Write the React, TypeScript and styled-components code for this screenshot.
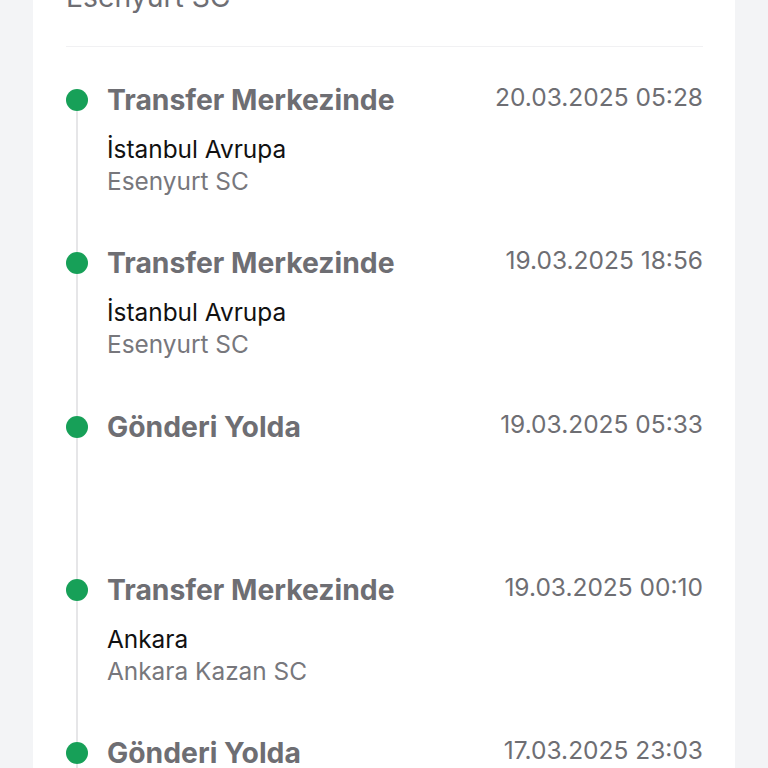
import React from "react";
import styled, { createGlobalStyle } from "styled-components";

const GlobalStyle = createGlobalStyle`
	html, body {
		margin: 0;
		padding: 0;
		background: #f3f4f6;
		font-family: Inter, "Noto Sans", "DejaVu Sans", sans-serif;
		overflow: hidden;
	}
`;

const Page = styled.div`
	height: 768px;
	padding: 0 33px;
	overflow: hidden;
`;

const Card = styled.section`
	background: #ffffff;
	padding: 0 32px 0 33px;
	min-height: 100%;
`;

const PrevPlace = styled.div`
	margin-top: -20px;
	font-size: 28.3px;
	line-height: 34px;
	color: #6e6e73;
`;

const Divider = styled.hr`
	border: 0;
	height: 1px;
	background: #f1f1f3;
	margin: 32px 0 42px;
`;

const Timeline = styled.ol`
	list-style: none;
	margin: 0;
	padding: 0;
`;

const Item = styled.li`
	display: grid;
	grid-template-columns: 22px 1fr;
	column-gap: 19px;
	height: 163.3px;
`;

const Rail = styled.div`
	display: flex;
	flex-direction: column;
	align-items: center;
`;

const Dot = styled.span`
	width: 22px;
	height: 22px;
	border-radius: 50%;
	background: #17a058;
	flex: none;
`;

const Line = styled.span`
	width: 2px;
	flex: 1;
	background: #e6e6e8;
`;

const Body = styled.div`
	display: flex;
	flex-direction: column;
`;

const Head = styled.div`
	display: flex;
	justify-content: space-between;
	align-items: flex-start;
`;

const Status = styled.h3`
	margin: 0;
	font-size: 28.3px;
	line-height: 22px;
	font-weight: 700;
	color: #6e6e73;
`;

const Time = styled.span`
	font-size: 24.5px;
	line-height: 17px;
	color: #6e6e73;
`;

const Location = styled.div`
	margin-top: 22px;
	font-size: 24.4px;
	line-height: 32px;
	color: #111111;
`;

const Branch = styled.div`
	font-size: 24.4px;
	line-height: 32px;
	color: #77777c;
`;

type Step = {
	status: string;
	time: string;
	city?: string;
	branch?: string;
};

const steps: Step[] = [
	{ status: "Transfer Merkezinde", time: "20.03.2025 05:28", city: "İstanbul Avrupa", branch: "Esenyurt SC" },
	{ status: "Transfer Merkezinde", time: "19.03.2025 18:56", city: "İstanbul Avrupa", branch: "Esenyurt SC" },
	{ status: "Gönderi Yolda", time: "19.03.2025 05:33" },
	{ status: "Transfer Merkezinde", time: "19.03.2025 00:10", city: "Ankara", branch: "Ankara Kazan SC" },
	{ status: "Gönderi Yolda", time: "17.03.2025 23:03" },
];

const App = () => (
	<>
		<GlobalStyle />
		<Page>
			<Card>
				<PrevPlace>Esenyurt SC</PrevPlace>
				<Divider />
				<Timeline>
					{steps.map((s, i) => (
						<Item key={i}>
							<Rail>
								<Dot />
								<Line />
							</Rail>
							<Body>
								<Head>
									<Status>{s.status}</Status>
									<Time>{s.time}</Time>
								</Head>
								{s.city && <Location>{s.city}</Location>}
								{s.branch && <Branch>{s.branch}</Branch>}
							</Body>
						</Item>
					))}
				</Timeline>
			</Card>
		</Page>
	</>
);

export default App;
